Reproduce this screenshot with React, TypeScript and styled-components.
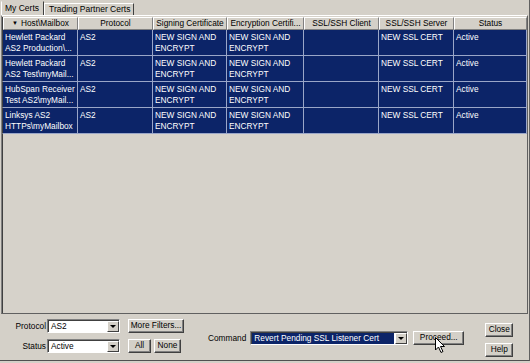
import React from "react";
import styled, { createGlobalStyle } from "styled-components";

const GlobalStyle = createGlobalStyle`
  html, body { margin: 0; padding: 0; background: #d4d0c8; }
  body { font-family: "Liberation Sans", Arial, sans-serif; font-size: 8px; color: #000; }
  * { box-sizing: border-box; }
`;

const Window = styled.div`
  position: relative;
  width: 530px;
  height: 361px;
  background: #d4d0c8;
  border-bottom: 1px solid #505050;
  border-right: 1px solid #606060;
  display: flex;
  flex-direction: column;
`;

const TabStrip = styled.div`
  height: 15px;
  display: flex;
  align-items: flex-end;
  padding-left: 1px;
`;

const Tab = styled.div<{ $active?: boolean }>`
  height: ${(p) => (p.$active ? 14 : 12)}px;
  padding: ${(p) => (p.$active ? "1px 4px 0 3px" : "0 3px 0 4px")};
  line-height: 11px;
  border-top: 1px solid ${(p) => (p.$active ? "#d4d0c8" : "#ffffff")};
  border-left: 1px solid #ffffff;
  border-right: 1px solid #404040;
  white-space: nowrap;
  font-size: 8.5px;
`;

const Panel = styled.div`
  margin: 0 1px 0 1px;
  height: 299px;
  border-left: 1px solid #808080;
  border-top: 1px solid #ffffff;
  border-right: 1px solid #606060;
  border-bottom: 1px solid #606060;
  padding: 1px 0 0 0;
  display: flex;
  flex-direction: column;
  background: #d6d2ca;
`;

const cols = "75px 75px 74px 77px 75px 75px 1fr";

const HeaderRow = styled.div`
  display: grid;
  grid-template-columns: ${cols};
  height: 13px;
  border-left: 1px solid #404040;
`;

const HeaderCell = styled.div`
  background: #d4d0c8;
  border-top: 1px solid #ffffff;
  border-left: 1px solid #ffffff;
  border-right: 1px solid #808080;
  border-bottom: 1px solid #808080;
  text-align: center;
  line-height: 11px;
  white-space: nowrap;
  overflow: hidden;
  font-size: 8.3px;
`;

const SortArrow = styled.span`
  font-size: 6px;
  margin-right: 3px;
  vertical-align: 1px;
`;

const Row = styled.div`
  display: grid;
  grid-template-columns: ${cols};
  height: 26px;
  background: #0c2468;
  border-bottom: 1px solid #9aa6c8;
  border-left: 1px solid #404040;
`;

const Cell = styled.div`
  color: #ffffff;
  border-right: 1px solid #9aa6c8;
  padding: 2px 0 0 2px;
  line-height: 10.5px;
  overflow: hidden;
  white-space: pre;
  font-size: 8.3px;
`;

const Empty = styled.div`
  flex: 1;
  border-left: 1px solid #404040;
`;

const Bottom = styled.div`
  flex: 1;
  display: flex;
  align-items: flex-start;
  padding-top: 5px;
`;

const Filters = styled.div`
  display: grid;
  grid-template-columns: 47px 73px;
  row-gap: 6px;
  align-items: center;
`;

const Label = styled.div`
  text-align: right;
  padding-right: 1px;
  font-size: 8.3px;
  white-space: nowrap;
`;

const SelectBox = styled.div<{ $w: number }>`
  width: ${(p) => p.$w}px;
  height: 14px;
  background: #ffffff;
  border-top: 1px solid #808080;
  border-left: 1px solid #808080;
  border-right: 1px solid #ffffff;
  border-bottom: 1px solid #ffffff;
  box-shadow: inset 1px 1px 0 #404040;
  display: flex;
  align-items: stretch;
  padding: 1px 0 0 1px;
`;

const SelectText = styled.div<{ $selected?: boolean }>`
  flex: 1;
  line-height: 11px;
  padding-left: 2px;
  font-size: 8.3px;
  white-space: nowrap;
  overflow: hidden;
  background: ${(p) => (p.$selected ? "#0c2468" : "transparent")};
  color: ${(p) => (p.$selected ? "#ffffff" : "#000000")};
  margin-right: ${(p) => (p.$selected ? "1px" : "0")};
`;

const ArrowBtn = styled.div`
  width: 12px;
  background: #d4d0c8;
  border-top: 1px solid #ffffff;
  border-left: 1px solid #ffffff;
  border-right: 1px solid #404040;
  border-bottom: 1px solid #404040;
  display: flex;
  align-items: center;
  justify-content: center;
  &::after {
    content: "";
    border-left: 3px solid transparent;
    border-right: 3px solid transparent;
    border-top: 3px solid #000;
  }
`;

const ButtonCol = styled.div`
  display: flex;
  flex-direction: column;
  gap: 6px;
  margin-left: 8px;
`;

const ButtonRow = styled.div`
  display: flex;
  gap: 3px;
`;

const Button = styled.div<{ $w: number }>`
  width: ${(p) => p.$w}px;
  height: 14px;
  background: #d4d0c8;
  border-top: 1px solid #ffffff;
  border-left: 1px solid #ffffff;
  border-right: 1px solid #404040;
  border-bottom: 1px solid #404040;
  box-shadow: inset -1px -1px 0 #808080;
  text-align: center;
  line-height: 11px;
  font-size: 8.3px;
  white-space: nowrap;
`;

const CommandGroup = styled.div`
  display: flex;
  align-items: center;
  margin-left: 24px;
  margin-top: 12px;
`;

const CommandLabel = styled.div`
  font-size: 8.3px;
  margin-right: 4px;
`;

const ProceedWrap = styled.div`
  margin-left: 5px;
`;

const CloseCol = styled.div`
  display: flex;
  flex-direction: column;
  gap: 6px;
  margin-left: 21px;
  margin-top: 4px;
`;

const Cursor = styled.svg`
  position: absolute;
  left: 435px;
  top: 337px;
`;

const headers = [
  "Host\\Mailbox",
  "Protocol",
  "Signing Certificate",
  "Encryption Certifi...",
  "SSL/SSH Client",
  "SSL/SSH Server",
  "Status",
];

const rows = [
  ["Hewlett Packard\nAS2 Production\\...", "AS2", "NEW SIGN AND\nENCRYPT", "NEW SIGN AND\nENCRYPT", "", "NEW SSL CERT", "Active"],
  ["Hewlett Packard\nAS2 Test\\myMail...", "AS2", "NEW SIGN AND\nENCRYPT", "NEW SIGN AND\nENCRYPT", "", "NEW SSL CERT", "Active"],
  ["HubSpan Receiver\nTest AS2\\myMail...", "AS2", "NEW SIGN AND\nENCRYPT", "NEW SIGN AND\nENCRYPT", "", "NEW SSL CERT", "Active"],
  ["Linksys AS2\nHTTPs\\myMailbox", "AS2", "NEW SIGN AND\nENCRYPT", "NEW SIGN AND\nENCRYPT", "", "NEW SSL CERT", "Active"],
];

export default function App() {
  return (
    <>
      <GlobalStyle />
      <Window>
        <TabStrip>
          <Tab $active>My Certs</Tab>
          <Tab>Trading Partner Certs</Tab>
        </TabStrip>
        <Panel>
          <HeaderRow>
            {headers.map((h, i) => (
              <HeaderCell key={h}>
                {i === 0 && <SortArrow>▼</SortArrow>}
                {h}
              </HeaderCell>
            ))}
          </HeaderRow>
          {rows.map((r, ri) => (
            <Row key={ri}>
              {r.map((c, ci) => (
                <Cell key={ci}>{c}</Cell>
              ))}
            </Row>
          ))}
          <Empty />
        </Panel>
        <Bottom>
          <Filters>
            <Label>Protocol</Label>
            <SelectBox $w={73}>
              <SelectText>AS2</SelectText>
              <ArrowBtn />
            </SelectBox>
            <Label>Status</Label>
            <SelectBox $w={73}>
              <SelectText>Active</SelectText>
              <ArrowBtn />
            </SelectBox>
          </Filters>
          <ButtonCol>
            <Button $w={56}>More Filters...</Button>
            <ButtonRow>
              <Button $w={23}>All</Button>
              <Button $w={27}>None</Button>
            </ButtonRow>
          </ButtonCol>
          <CommandGroup>
            <CommandLabel>Command</CommandLabel>
            <SelectBox $w={158}>
              <SelectText $selected>Revert Pending SSL Listener Cert</SelectText>
              <ArrowBtn />
            </SelectBox>
            <ProceedWrap>
              <Button $w={51}>Proceed...</Button>
            </ProceedWrap>
          </CommandGroup>
          <CloseCol>
            <Button $w={28}>Close</Button>
            <Button $w={28}>Help</Button>
          </CloseCol>
        </Bottom>
        <Cursor width="12" height="18" viewBox="0 0 12 18">
          <path d="M0.5 0.5 L0.5 13 L3.5 10 L6 15.5 L8 14.5 L5.5 9.5 L9.5 9.5 Z" fill="#fff" stroke="#000" strokeWidth="1" />
        </Cursor>
      </Window>
    </>
  );
}
